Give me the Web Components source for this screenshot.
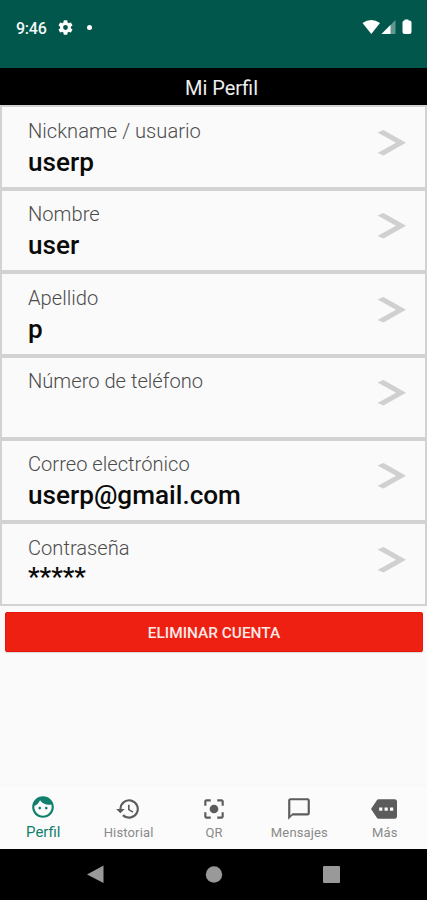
<!DOCTYPE html>
<html lang="es">
<head>
<meta charset="utf-8">
<title>Mi Perfil</title>
<style>
html,body{margin:0;padding:0}
body{width:427px;height:900px;overflow:hidden;background:#fafafa;font-family:Roboto,"Noto Sans",sans-serif}
</style>
</head>
<body>
<profile-screen></profile-screen>
<script>
function define(name, markup) {
  const template = document.createElement('template');
  template.innerHTML = markup;
  customElements.define(name, class extends HTMLElement {
    constructor() {
      super();
      this.attachShadow({mode: 'open'}).append(template.content.cloneNode(true));
    }
  });
}

define('status-bar', `
<style>
:host{display:flex;box-sizing:border-box;height:68px;padding:0 15px 13px 16px;align-items:center;background:#01574b;color:#f4f8f7;font-size:16px;font-weight:500}
svg{display:block;fill:#fff}
.time{letter-spacing:-.25px;width:42px;padding-top:1px}
.gear{margin-top:-1px}
.dot{width:5px;height:5px;border-radius:50%;background:#fff;margin-left:14px}
.right{display:flex;margin-left:auto;align-items:center;margin-top:-1px}
</style>
<span class="time">9:46</span>
<svg class="gear" width="15" height="15" viewBox="2 2 20 20"><path d="M19.140 12.940c.04-.3.06-.61.06-.94 0-.32-.02-.64-.07-.94l2.030-1.580c.18-.14.23-.41.12-.61l-1.920-3.320c-.12-.22-.37-.29-.59-.22l-2.390.96c-.5-.38-1.030-.7-1.620-.94l-.36-2.540c-.04-.24-.24-.41-.48-.41h-3.840c-.24 0-.43.17-.47.41l-.36 2.540c-.59.24-1.130.57-1.620.94l-2.390-.96c-.22-.08-.47 0-.59.22L2.740 8.870c-.12.21-.08.47.12.61l2.030 1.580c-.05.3-.09.63-.09.94s.02.64.07.94l-2.030 1.580c-.18.14-.23.41-.12.61l1.920 3.320c.12.22.37.29.59.22l2.390-.96c.5.38 1.030.7 1.620.94l.36 2.540c.05.24.24.41.48.41h3.840c.24 0 .44-.17.47-.41l.36-2.540c.59-.24 1.130-.56 1.620-.94l2.390.96c.22.08.47 0 .59-.22l1.920-3.320c.12-.22.07-.47-.12-.61l-2.010-1.580zM12 15.200a3.200 3.200 0 1 1 0-6.400 3.200 3.200 0 0 1 0 6.400z"/></svg>
<span class="dot"></span>
<span class="right">
<svg width="50" height="16" viewBox="0 0 50 16"><path d="M.5 4Q9.300-2 18 4L9.300 15z"/><path d="M33.500 1v14H19.500z" opacity=".38"/><path d="M28.500 6v9h-9z"/><path d="M42.500 1.500V.600h4v.9h1q2 0 2 2V13q0 2-2 2H42.500q-2 0-2-2V3.500q0-2 2-2z"/></svg>
</span>`);

define('title-bar', `
<style>:host{display:flex;height:37.400px;align-items:center;justify-content:center;background:#000;color:#eee;font-size:20px;padding:2px 0 0 16px;box-sizing:border-box}</style>
<span><slot></slot></span>`);

define('profile-field', `
<style>
:host{display:flex;box-sizing:border-box;height:83.4px;border:2px solid #d2d2d2;border-left-width:2.5px;padding:11.500px 19px 0 26px;justify-content:space-between;background:#fafafa}
.label{font-size:20.15px;line-height:24px;font-weight:300;color:#4c4c4c}
.value{font-size:26.15px;line-height:32px;margin-top:3px;font-weight:500;color:#0a0a0a}
:host([masked]) .value{margin-top:1px}
svg{display:block;margin-top:11px}
</style>
<div><div class="label"><slot name="label"></slot></div><div class="value"><slot></slot></div></div>
<svg width="29" height="26" viewBox="0 0 29 26"><path d="M.5 2.500L6.500 0 29 12.800 6.500 25.500 .5 23 19 12.800z" fill="#d0d0d0"/></svg>`);

define('danger-button', `
<style>
:host{display:block;margin:6.500px 4px 0 5px}
button{display:block;width:100%;height:39.500px;border:1px solid #e8150f;border-radius:2px;background:#ee2012;color:#ffe9e6;font:500 15.4px Roboto,sans-serif;padding:2px 0 0;box-shadow:0 1px 1px #0002}
</style>
<button><slot></slot></button>`);

define('tab-item', `
<style>
:host{display:flex;flex:1 1 0;flex-direction:column;align-items:center;color:#8a8a8a;fill:#5c5c5c;font-size:13px;letter-spacing:.15px;padding-top:10px}
:host([active]){color:#10806c;fill:#10806c;font-size:15px;letter-spacing:0;padding-top:8px}
span{line-height:18px;margin-top:2px;padding-left:1px}
:host([active]) span{margin-top:3px}
::slotted(svg){display:block}
</style>
<slot name="icon"></slot><span><slot></slot></span>`);

define('tab-bar', `
<style>:host{display:flex;height:63px;margin-top:auto;background:#fbfbfb;box-shadow:0 -1px 2px #00000005}</style>
<slot></slot>`);

define('system-nav', `
<style>
:host{display:flex;height:51px;background:#000;justify-content:center}
svg{display:block}
</style>
<svg width="427" height="51" viewBox="0 0 427 51" fill="#999"><path d="M87 25.500L103.500 16.500V34z"/><circle cx="214" cy="25.500" r="8.200"/><rect x="323" y="17" width="17" height="17" rx="1"/></svg>`);

define('profile-screen', `
<style>
:host{display:flex;flex-direction:column;width:427px;height:900px;background:#fafafa}
</style>
<status-bar></status-bar>
<title-bar>Mi Perfil</title-bar>
<profile-field><span slot="label">Nickname / usuario</span>userp</profile-field>
<profile-field><span slot="label">Nombre</span>user</profile-field>
<profile-field><span slot="label">Apellido</span>p</profile-field>
<profile-field><span slot="label">Número de teléfono</span></profile-field>
<profile-field><span slot="label">Correo electrónico</span>userp@gmail.com</profile-field>
<profile-field masked><span slot="label">Contraseña</span>*****</profile-field>
<danger-button>ELIMINAR CUENTA</danger-button>
<tab-bar>
<tab-item active><svg slot="icon" width="26" height="26" viewBox="0 0 24 24"><path d="M9 11.750c-.69 0-1.250.56-1.250 1.250s.56 1.250 1.250 1.250 1.250-.56 1.250-1.250-.56-1.250-1.250-1.250zm6 0c-.69 0-1.250.56-1.250 1.250s.56 1.250 1.250 1.250 1.250-.56 1.250-1.250-.56-1.250-1.250-1.250zM12 2C6.480 2 2 6.480 2 12s4.480 10 10 10 10-4.480 10-10S17.520 2 12 2zm0 18c-4.410 0-8-3.590-8-8 0-.29.02-.58.05-.86 2.360-1.050 4.230-2.980 5.210-5.370C11.070 8.330 14.050 10 17.420 10c.78 0 1.530-.09 2.250-.26.21.71.33 1.470.33 2.260 0 4.410-3.590 8-8 8z"/></svg>Perfil</tab-item>
<tab-item><svg slot="icon" width="26" height="26" viewBox="0 0 24 24"><path d="M13 3a9 9 0 0 0-9 9H1l3.890 3.890.07.14L9 12H6a7 7 0 1 1 2.060 4.940l-1.420 1.420A9 9 0 1 0 13 3zm-1 5v5l4.280 2.540.72-1.210-3.500-2.080V8H12z"/></svg>Historial</tab-item>
<tab-item><svg slot="icon" width="26" height="26" viewBox="0 0 24 24"><path d="M12 8a4 4 0 1 0 0 8 4 4 0 0 0 0-8zm-7 7H3v4c0 1.100.9 2 2 2h4v-2H5v-4zM5 5h4V3H5c-1.100 0-2 .9-2 2v4h2V5zm14-2h-4v2h4v4h2V5c0-1.100-.9-2-2-2zm0 16h-4v2h4c1.100 0 2-.9 2-2v-4h-2v4z"/></svg>QR</tab-item>
<tab-item><svg slot="icon" width="26" height="26" viewBox="0 0 24 24"><path d="M20 2H4c-1.100 0-2 .9-2 2v18l4-4h14c1.100 0 2-.9 2-2V4c0-1.100-.9-2-2-2zm0 14H6l-2 2V4h16v12z"/></svg>Mensajes</tab-item>
<tab-item><svg slot="icon" width="26" height="26" viewBox="0 0 24 24"><path fill-rule="evenodd" d="M22 3H7c-.69 0-1.230.35-1.590.88L0 12l5.410 8.110c.36.53.9.89 1.590.89h15c1.100 0 2-.9 2-2V5c0-1.100-.9-2-2-2zM7.500 10.500h3v3h-3zM12.500 10.500h3v3h-3zM17.500 10.500h3v3h-3z"/></svg>Más</tab-item>
</tab-bar>
<system-nav></system-nav>`);
</script>
</body>
</html>
